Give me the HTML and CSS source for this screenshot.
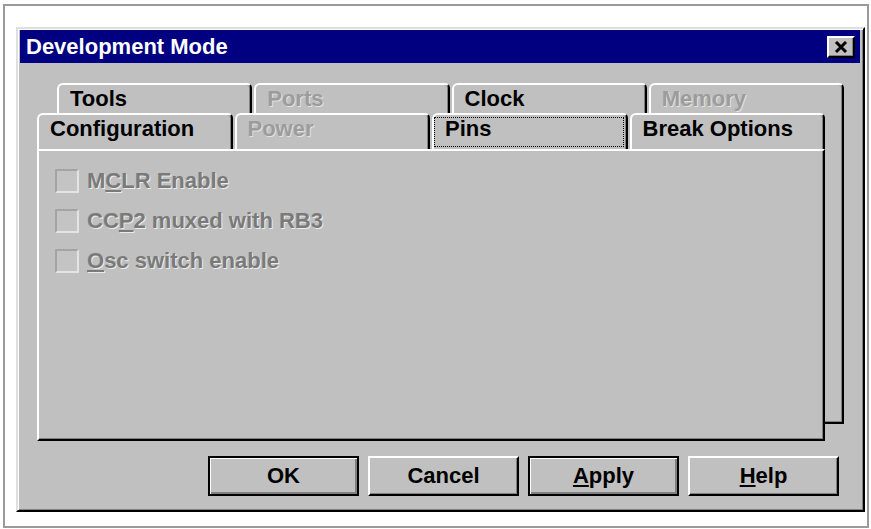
FILE: index.html
```html
<!DOCTYPE html>
<html lang="en">
<head>
    <meta charset="UTF-8">
    <meta name="viewport" content="width=device-width, initial-scale=1.0">
    <title>Development Mode</title>
    <link rel="stylesheet" href="styles.css">
</head>
<body>
    <div class="frame">
        <div class="dialog">
            <div class="titlebar">
                <span class="title">Development Mode</span>
                <button class="close" aria-label="Close">
                    <svg width="14" height="12" viewBox="0 0 14 12">
                        <path d="M2 1 L12 11 M12 1 L2 11" stroke="#000" stroke-width="3" fill="none"/>
                    </svg>
                </button>
            </div>

            <div class="body">
                <div class="tabset">
                    <!-- back row of tabs and the sheet edge behind the page -->
                    <div class="layer back">
                        <div class="tabrow">
                            <div class="tab"><span class="label">Tools</span></div>
                            <div class="tab disabled"><span class="label">Ports</span></div>
                            <div class="tab"><span class="label">Clock</span></div>
                            <div class="tab disabled"><span class="label">Memory</span></div>
                        </div>
                        <div class="sheet"></div>
                    </div>

                    <!-- front row and the visible page -->
                    <div class="layer front">
                        <div class="tabrow">
                            <div class="tab"><span class="label">Configuration</span></div>
                            <div class="tab disabled"><span class="label">Power</span></div>
                            <div class="tab"><span class="label focus">Pins</span></div>
                            <div class="tab"><span class="label">Break Options</span></div>
                        </div>
                        <div class="panel">
                            <label class="check"><span class="box"></span><span>M<u>C</u>LR Enable</span></label>
                            <label class="check"><span class="box"></span><span>CC<u>P</u>2 muxed with RB3</span></label>
                            <label class="check"><span class="box"></span><span><u>O</u>sc switch enable</span></label>
                        </div>
                    </div>
                </div>

                <div class="buttons">
                    <button class="btn default">OK</button>
                    <button class="btn">Cancel</button>
                    <button class="btn default"><u>A</u>pply</button>
                    <button class="btn"><u>H</u>elp</button>
                </div>
            </div>
        </div>
    </div>
</body>
</html>
```

FILE: styles.css
```css
body {
    margin: 0;
    background: #fff;
    font-family: "Liberation Sans", Arial, sans-serif;
}
.frame {
    margin: 4px 0 0 3px;
    width: 866px;
    height: 524px;
    box-sizing: border-box;
    border: 2px solid #9a9a9a;
    padding: 21px 0 0 11px;
}
.dialog {
    width: 849px;
    height: 485px;
    box-sizing: border-box;
    background: #c0c0c0;
    border: 2px solid;
    border-color: #dfdfdf #000 #000 #dfdfdf;
    box-shadow: inset 1px 1px #fff, inset -1px -1px #808080;
    padding: 1px 3px 0 2px;
    display: flex;
    flex-direction: column;
}
.titlebar {
    height: 33px;
    flex: none;
    background: #000080;
    color: #fff;
    display: flex;
    align-items: center;
    justify-content: space-between;
    padding: 0 5px 0 6px;
}
.title {
    font-size: 22px;
    font-weight: bold;
    line-height: 33px;
}
.close {
    width: 28px;
    height: 22px;
    padding: 0;
    background: #c0c0c0;
    border: 2px solid;
    border-color: #fff #000 #000 #fff;
    box-shadow: inset -1px -1px #808080;
    display: flex;
    align-items: center;
    justify-content: center;
}
.body {
    flex: 1;
    padding: 20px 16px 14px 17px;
    display: flex;
    flex-direction: column;
}

/* tabs */
.tabset {
    height: 358px;
    display: grid;
}
.layer {
    grid-area: 1 / 1;
    display: flex;
    flex-direction: column;
}
.back {
    margin-left: 20px;
    margin-bottom: 17px;
}
.front {
    margin-top: 30px;
    margin-right: 19px;
}
.tabrow {
    display: grid;
    grid-template-columns: repeat(4, 1fr);
    column-gap: 2px;
    flex: none;
}
.back .tabrow {
    height: 30px;
}
.front .tabrow {
    height: 36px;
}
.tab {
    border: 2px solid;
    border-bottom: 0;
    border-color: #fff #000 transparent #fff;
    border-radius: 6px 5px 0 0;
    box-shadow: inset -1px 0 #808080;
    font-size: 22px;
    font-weight: bold;
    color: #000;
}
.tab .label {
    display: block;
    box-sizing: border-box;
    height: calc(100% - 4px);
    margin: 2px 2px 2px 0;
    border: 1px solid transparent;
    padding-left: 10px;
    line-height: 22px;
}
.tab .label.focus {
    border: 1px dotted #000;
}
.tab.disabled {
    color: #9c9c9c;
    text-shadow: 1px 1px 0 #e2e2e2;
}
.sheet {
    flex: 1;
    border-right: 2px solid #000;
    border-bottom: 2px solid #000;
    box-shadow: inset -1px -1px #808080;
}
.panel {
    flex: 1;
    background: #c0c0c0;
    border: 2px solid;
    border-color: #fff #000 #000 #fff;
    box-shadow: inset -1px -1px #808080;
    padding: 18px 16px;
    display: flex;
    flex-direction: column;
    gap: 16px;
}

/* greyed-out checkboxes */
.check {
    display: flex;
    align-items: center;
    gap: 8px;
    height: 24px;
    font-size: 22px;
    font-weight: bold;
    color: #7a7a7a;
    text-shadow: 1px 1px 0 #ececec;
}
.box {
    width: 24px;
    height: 24px;
    box-sizing: border-box;
    border: 2px solid;
    border-color: #a4a4a4 #e4e4e4 #e4e4e4 #a4a4a4;
    background: #c4c4c4;
}

/* dialog buttons */
.buttons {
    margin-top: 15px;
    margin-right: 5px;
    display: flex;
    justify-content: flex-end;
    gap: 9px;
}
.btn {
    width: 151px;
    height: 40px;
    box-sizing: border-box;
    padding: 0;
    background: #c0c0c0;
    border: 2px solid;
    border-color: #fff #000 #000 #fff;
    box-shadow: inset -1px -1px #808080;
    font-family: "Liberation Sans", Arial, sans-serif;
    font-size: 22px;
    font-weight: bold;
    color: #000;
}
.btn.default {
    border-color: #000;
    box-shadow: inset 1px 1px #fff, inset -2px -2px #808080;
}
```
